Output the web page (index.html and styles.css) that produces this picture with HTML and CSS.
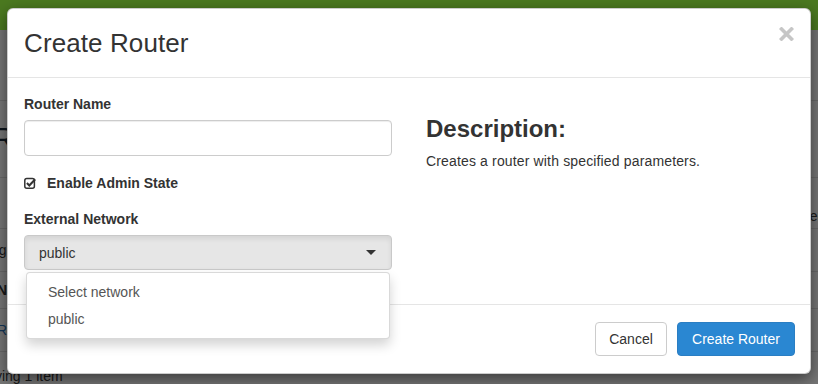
FILE: index.html
```html
<!DOCTYPE html>
<html lang="en">
<head>
    <meta charset="UTF-8">
    <meta name="viewport" content="width=device-width, initial-scale=1.0">
    <title>Create Router</title>
    <link rel="stylesheet" href="styles.css">
</head>
<body>

<!-- Page behind the dialog -->
<div class="page">
    <div class="topbar"></div>
    <div class="page-content">
        <div class="page-row row-crumb">Project</div>
        <div class="page-row row-title">Routers</div>
        <div class="page-row row-tools"><span class="right-frag">Filter</span></div>
        <div class="page-row row-count">Displaying 1 item</div>
        <div class="page-row row-head">Name</div>
        <div class="page-row row-link">Router</div>
        <div class="page-row row-foot">Displaying 1 item</div>
    </div>
    <div class="backdrop"></div>
</div>

<!-- Modal dialog -->
<div class="modal">
    <div class="modal-header">
        <h3 class="modal-title">Create Router</h3>
        <span class="close">
            <svg width="15" height="14" viewBox="0 0 15 14"><path d="M2.5 2 L12.5 12 M12.5 2 L2.5 12" stroke="#c6c6c6" stroke-width="3.6" stroke-linecap="square"/></svg>
        </span>
    </div>

    <div class="modal-body">
        <div class="form-col">
            <label class="field-label" for="router-name">Router Name</label>
            <input type="text" id="router-name" class="text-input">

            <div class="check-row">
                <svg class="check-icon" width="12" height="12" viewBox="0 0 12 12">
                    <rect x="0.8" y="1.6" width="9.6" height="9.6" rx="2" fill="none" stroke="#333" stroke-width="1.5"/>
                    <path d="M2.9 6 L5.3 8.4 L11.2 2.2" fill="none" stroke="#333" stroke-width="2.1"/>
                </svg>
                <span class="check-label">Enable Admin State</span>
            </div>

            <label class="field-label label-spaced">External Network</label>
            <div class="select-wrap">
                <div class="select-box">
                    <span>public</span>
                    <span class="caret"></span>
                </div>
                <ul class="dropdown">
                    <li>Select network</li>
                    <li>public</li>
                </ul>
            </div>
        </div>

        <div class="desc-col">
            <h3 class="desc-title">Description:</h3>
            <p class="desc-text">Creates a router with specified parameters.</p>
        </div>
    </div>

    <div class="modal-footer">
        <button class="btn btn-default">Cancel</button>
        <button class="btn btn-primary">Create Router</button>
    </div>
</div>

</body>
</html>
```

FILE: styles.css
```css
body {
    margin: 0;
    font-family: "Liberation Sans", Arial, sans-serif;
    color: #333;
    width: 818px;
    height: 384px;
    overflow: hidden;
    position: relative;
    background-color: #ececec;
}

/* Page behind the dialog */
.page {
    height: 384px;
}

.topbar {
    height: 30px;
    background-color: #97f241;
}

.page-content {
    margin-left: -60px;
    width: 940px;
    margin-top: 30px;
}

.page-row {
    border-bottom: 1px solid #d0d0d0;
    font-size: 14px;
    color: #333;
    position: relative;
}

.row-crumb {
    height: 40px;
    line-height: 40px;
    padding-left: 10px;
}

.row-title {
    height: 76px;
    line-height: 76px;
    font-size: 32px;
    padding-left: 52px;
    color: #1a2a3a;
}

.row-tools {
    height: 50px;
}

.right-frag {
    position: absolute;
    left: 851px;
    top: 28px;
    line-height: 20px;
}

.row-count {
    height: 42px;
    line-height: 42px;
    padding-left: 2px;
}

.row-head {
    height: 36px;
    line-height: 36px;
    font-weight: bold;
    padding-left: 57px;
}

.row-link {
    height: 42px;
    line-height: 42px;
    color: #2a6fb3;
    padding-left: 57px;
}

.row-foot {
    height: 50px;
    line-height: 48px;
    padding-left: 16px;
    border-bottom: none;
}

.backdrop {
    position: absolute;
    inset: 0;
    background-color: rgba(0, 0, 0, 0.5);
}

/* Dialog */
.modal {
    position: absolute;
    left: 7px;
    top: 8px;
    width: 802px;
    height: 364px;
    background-color: #fff;
    border: 1px solid rgba(0, 0, 0, 0.2);
    border-radius: 6px;
    box-shadow: 0 5px 15px rgba(0, 0, 0, 0.5);
    display: flex;
    flex-direction: column;
}

.modal-header {
    position: relative;
    padding: 19px 16px 19px;
    border-bottom: 1px solid #e5e5e5;
}

.modal-title {
    margin: 0;
    font-size: 26px;
    line-height: 30px;
    font-weight: normal;
    color: #333;
    letter-spacing: 0.1px;
}

.close {
    position: absolute;
    right: 16px;
    top: 18px;
    line-height: 0;
}

.modal-body {
    display: flex;
    padding: 16px 16px 34px;
}

.form-col {
    width: 368px;
}

.field-label {
    display: block;
    font-size: 14px;
    font-weight: bold;
    line-height: 20px;
    margin-bottom: 6px;
}

.label-spaced {
    margin-top: 16px;
}

.text-input {
    display: block;
    box-sizing: border-box;
    width: 100%;
    height: 36px;
    border: 1px solid #ccc;
    border-radius: 4px;
    box-shadow: inset 0 1px 1px rgba(0, 0, 0, 0.075);
    margin: 0;
}

.check-row {
    display: flex;
    align-items: center;
    margin-top: 17px;
    height: 20px;
}

.check-icon {
    margin-right: 11px;
}

.check-label {
    font-size: 14px;
    font-weight: bold;
}

.select-wrap {
    position: relative;
}

.select-box {
    box-sizing: border-box;
    height: 35px;
    display: flex;
    align-items: center;
    justify-content: space-between;
    padding: 0 15px 0 14px;
    background-color: #e6e6e6;
    border: 1px solid #c9c9c9;
    border-radius: 4px;
    box-shadow: inset 0 3px 5px rgba(0, 0, 0, 0.08);
    font-size: 14px;
    color: #333;
}

.caret {
    width: 0;
    height: 0;
    border-left: 5px solid transparent;
    border-right: 5px solid transparent;
    border-top: 5px solid #333;
}

.dropdown {
    position: absolute;
    left: 2px;
    right: 2px;
    top: 37px;
    margin: 0;
    padding: 6px 0 5px;
    list-style: none;
    background-color: #fff;
    border: 1px solid rgba(0, 0, 0, 0.15);
    border-radius: 4px;
    box-shadow: 0 6px 12px rgba(0, 0, 0, 0.175);
    z-index: 2;
}

.dropdown li {
    height: 27px;
    line-height: 26px;
    padding-left: 21px;
    font-size: 14px;
    color: #555;
}

.desc-col {
    margin-left: 34px;
    flex: 1;
}

.desc-title {
    margin: 20px 0 0;
    font-size: 24px;
    line-height: 30px;
    font-weight: bold;
    color: #333;
}

.desc-text {
    margin: 8px 0 0;
    font-size: 14px;
    line-height: 18px;
    letter-spacing: 0.15px;
    color: #333;
}

/* Footer */
.modal-footer {
    margin-top: auto;
    border-top: 1px solid #e5e5e5;
    padding: 17px 15px 17px;
    display: flex;
    justify-content: flex-end;
    gap: 10px;
}

.btn {
    height: 34px;
    font-family: "Liberation Sans", Arial, sans-serif;
    font-size: 14px;
    border-radius: 4px;
    padding: 0 12px;
    cursor: pointer;
}

.btn-default {
    width: 72px;
    background-color: #fff;
    border: 1px solid #ccc;
    color: #333;
}

.btn-primary {
    width: 118px;
    background-color: #2a87d2;
    border: 1px solid #2a7ec3;
    color: #fff;
}
```
